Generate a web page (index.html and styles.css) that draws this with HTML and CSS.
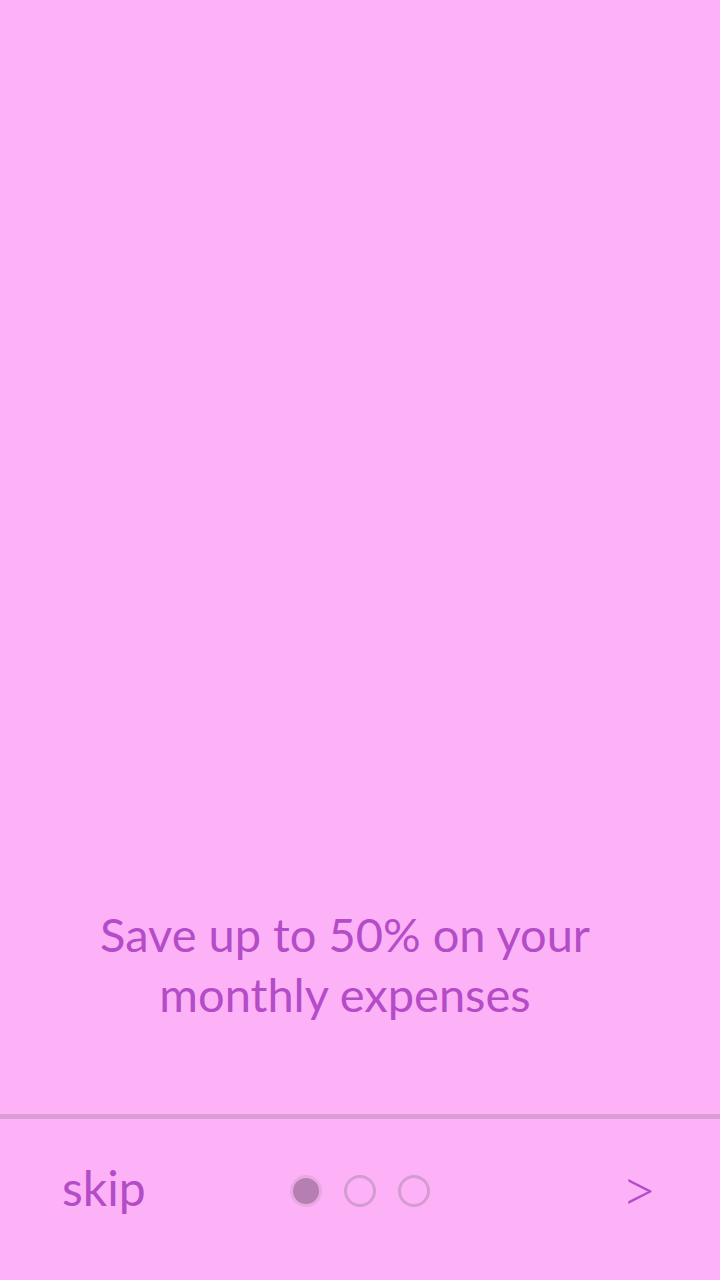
FILE: index.html
```html
<!DOCTYPE html>
<html>
<head>
<meta charset="utf-8">
<link rel="stylesheet" href="styles.css">
</head>
<body>
<div class="screen">
  <main class="hero">
    <p class="tagline">Save up to 50% on your<br>monthly expenses</p>
  </main>
  <div class="divider"></div>
  <footer class="footer">
    <span class="skip">skip</span>
    <div class="dots">
      <span class="dot active"></span>
      <span class="dot"></span>
      <span class="dot"></span>
    </div>
    <span class="next">&gt;</span>
  </footer>
</div>
</body>
</html>
```
FILE: styles.css
```css
html, body {
  margin: 0;
  padding: 0;
}
body {
  background: #fdb2f7;
  font-family: Lato, "Open Sans", sans-serif;
  color: #b44cc8;
}
.screen {
  width: 720px;
  height: 1280px;
  display: flex;
  flex-direction: column;
}
.hero {
  flex: 1;
  display: flex;
  align-items: flex-end;
  justify-content: center;
  padding-right: 30px;
  padding-bottom: 90px;
}
.tagline {
  margin: 0;
  text-align: center;
  font-size: 47px;
  line-height: 60px;
}
.divider {
  height: 5px;
  background: #da9ed4;
}
.footer {
  height: 161px;
  box-sizing: border-box;
  display: grid;
  grid-template-columns: 1fr auto 1fr;
  align-items: center;
  padding: 0 62px 18px 62px;
}
.skip {
  font-size: 48px;
  line-height: 1;
  margin-top: -6px;
}
.dots {
  display: flex;
  gap: 22px;
}
.dot {
  width: 26px;
  height: 26px;
  border: 3px solid #d49cd0;
  border-radius: 50%;
}
.dot.active {
  background: #b57fb2;
  border-color: #e8a8e4;
}
.next {
  justify-self: end;
  margin-right: 1px;
  font-size: 62px;
  line-height: 1;
  font-weight: 300;
  margin-top: -6px;
}
```
